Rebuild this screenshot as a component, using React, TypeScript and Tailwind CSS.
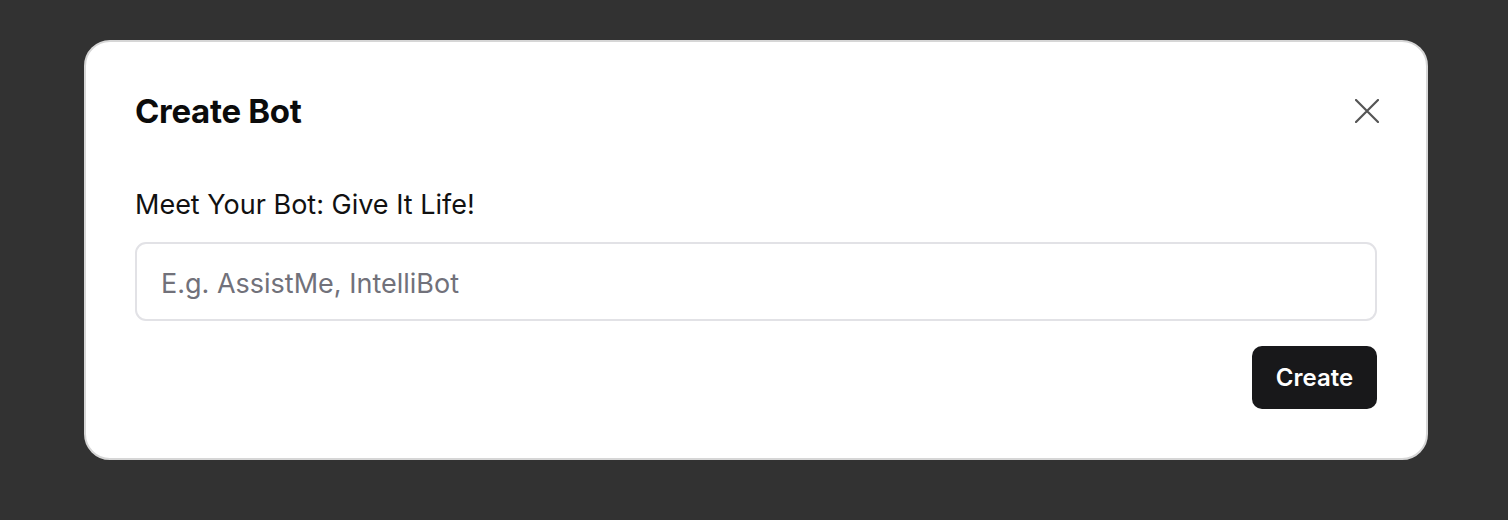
import React from 'react';

export default function App() {
  return (
    <div
      className="min-h-[520px] w-full bg-[#323232] pt-[40px] pl-[84px] pr-[80px]"
      style={{ fontFamily: 'Inter, "Noto Sans", sans-serif' }}
    >
      {/* Create Bot dialog */}
      <div className="h-[420px] rounded-[26px] border-2 border-[#d6d6d6] bg-white px-[49px] pt-[51px]">
        <div className="flex items-center justify-between">
          <h2 className="text-[33px] leading-[36px] font-bold tracking-[-0.3px] text-[#0b0b0b]">Create Bot</h2>
          <button className="mr-[-2px] flex h-[26px] w-[24px] items-center justify-center">
            <svg width="24" height="24" viewBox="0 0 24 24" fill="none">
              <path d="M1 1L23 23M23 1L1 23" stroke="#555555" strokeWidth="2.2" strokeLinecap="round" />
            </svg>
          </button>
        </div>

        <label className="mt-[60px] block text-[27px] leading-[32px] text-[#111111]">Meet Your Bot: Give It Life!</label>

        <input
          className="mt-[21px] block h-[79px] w-full rounded-[11px] border-2 border-[#e2e2e6] px-[24px] pt-[3px] text-[27px] text-[#111] outline-none placeholder:text-[#71717a]"
          placeholder="E.g. AssistMe, IntelliBot"
        />

        <div className="mt-[25px] flex justify-end">
          <button className="h-[63px] w-[125px] rounded-[10px] bg-[#18181a] text-[24px] font-semibold text-white">
            Create
          </button>
        </div>
      </div>
    </div>
  );
}
